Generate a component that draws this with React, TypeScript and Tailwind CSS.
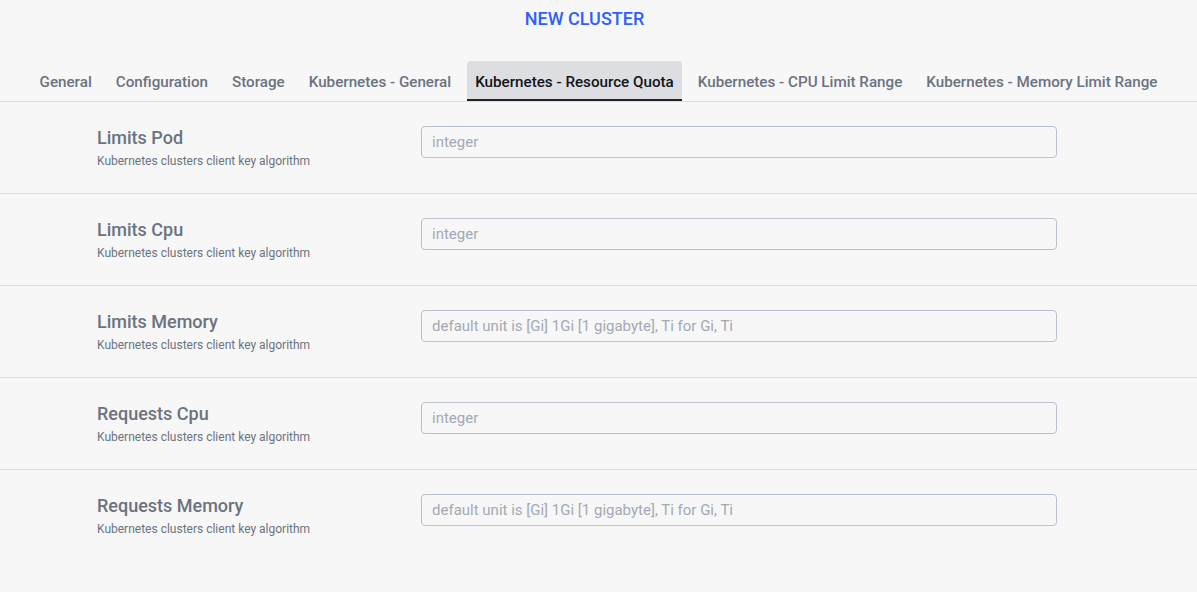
import React from 'react';

const tabs = [
  'General',
  'Configuration',
  'Storage',
  'Kubernetes - General',
  'Kubernetes - Resource Quota',
  'Kubernetes - CPU Limit Range',
  'Kubernetes - Memory Limit Range',
];

const fields = [
  { label: 'Limits Pod', placeholder: 'integer' },
  { label: 'Limits Cpu', placeholder: 'integer' },
  { label: 'Limits Memory', placeholder: 'default unit is [Gi] 1Gi [1 gigabyte], Ti for Gi, Ti' },
  { label: 'Requests Cpu', placeholder: 'integer' },
  { label: 'Requests Memory', placeholder: 'default unit is [Gi] 1Gi [1 gigabyte], Ti for Gi, Ti' },
];

const App: React.FC = () => {
  return (
    <div className="min-h-[592px] bg-[#f7f7f7] font-['Roboto',sans-serif]">
      <h1 className="pt-[7px] pr-[28px] text-center text-[18px] leading-[24px] font-medium text-[#2f5fff]">
        NEW CLUSTER
      </h1>

      <nav className="mt-[30px] flex justify-center gap-2 border-b border-[#dcdcdc]">
        {tabs.map((tab) => {
          const active = tab === 'Kubernetes - Resource Quota';
          return (
            <button
              key={tab}
              className={
                active
                  ? 'h-[40px] rounded-t-[4px] border-b-2 border-[#1f2227] bg-[#dcdee2] px-2 pt-[4px] text-[15.2px] font-medium text-[#111418]'
                  : 'h-[40px] px-2 pt-[2px] text-[15.2px] font-medium text-[#6b7280]'
              }
            >
              {tab}
            </button>
          );
        })}
      </nav>

      <div>
        {fields.map((f, i) => (
          <div
            key={f.label}
            className={`flex py-6 pl-[97px] ${i < fields.length - 1 ? 'border-b border-[#dcdcdc]' : ''}`}
          >
            <div className="w-[324px]">
              <div className="text-[18px] leading-[23px] font-medium text-[#6b7380]">{f.label}</div>
              <div className="mt-[5px] text-[12px] leading-[15px] text-[#6b7380]">
                Kubernetes clusters client key algorithm
              </div>
            </div>
            <input
              type="text"
              placeholder={f.placeholder}
              className="h-[32px] w-[636px] rounded-[4px] border border-[#b9c0ce] bg-transparent px-[10px] text-[15px] text-[#374151] placeholder:text-[#a3a9b4] outline-none"
            />
          </div>
        ))}
      </div>
    </div>
  );
};

export default App;
